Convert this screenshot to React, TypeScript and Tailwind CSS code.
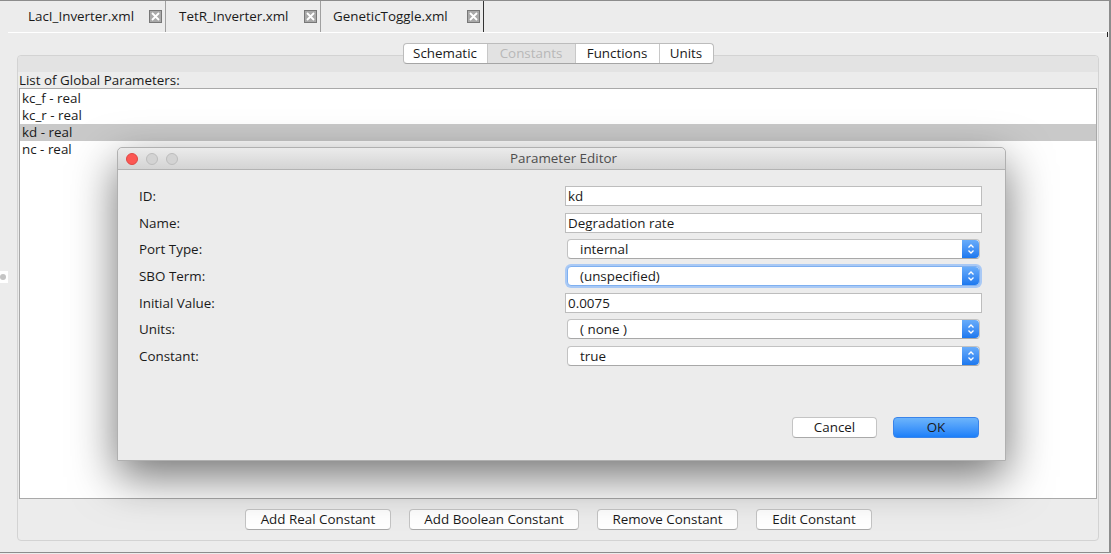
import { ReactNode } from 'react';

const tabs = [
  { name: 'LacI_Inverter.xml', w: 'w-[156px]', pl: 'pl-[18px]' },
  { name: 'TetR_Inverter.xml', w: 'w-[155px]', pl: 'pl-[13px]' },
  { name: 'GeneticToggle.xml', w: 'w-[163px]', pl: 'pl-[12px]' },
];

const params = ['kc_f - real', 'kc_r - real', 'kd - real', 'nc - real'];

function CloseBox() {
  return (
    <span className="w-[13px] h-[13px] bg-[#a9a9a9] border border-[#777] flex items-center justify-center">
      <svg width="9" height="9" viewBox="0 0 9 9">
        <path d="M1 1L8 8M8 1L1 8" stroke="#fff" strokeWidth="1.8" />
      </svg>
    </span>
  );
}

function Arrows() {
  return (
    <span className="w-[17px] h-full rounded-r-[4px] bg-gradient-to-b from-[#68acfa] to-[#1b78ef] flex items-center justify-center">
      <svg width="8" height="12" viewBox="0 0 8 12">
        <path d="M1.5 4.5L4 2L6.5 4.5M1.5 7.5L4 10L6.5 7.5" stroke="#fff" strokeWidth="1.3" fill="none" />
      </svg>
    </span>
  );
}

function TextField({ value }: { value: string }) {
  return (
    <div className="h-[20px] w-[417px] bg-white border border-[#bdbdbd] flex items-center pl-[2px]">{value}</div>
  );
}

function Select({ value, focus }: { value: string; focus?: boolean }) {
  return (
    <div
      className={`h-[20px] w-[413px] ml-[2px] bg-white rounded-[4px] flex items-center justify-between ${
        focus ? 'border border-[#7fb0f0] shadow-[0_0_0_2px_#a9c9f5]' : 'border border-[#c2c2c2] border-b-[#a8a8a8]'
      }`}
    >
      <span className="pl-[12px]">{value}</span>
      <Arrows />
    </div>
  );
}

function Row({ label, children }: { label: string; children: ReactNode }) {
  return (
    <div className="flex items-center h-[20px]">
      <span className="w-[426px]">{label}</span>
      {children}
    </div>
  );
}

function MacButton({ children, w }: { children: ReactNode; w: string }) {
  return (
    <button className={`${w} h-[21px] bg-white border border-[#c4c4c4] border-b-[#a9a9a9] rounded-[4px] flex items-center justify-center`}>
      {children}
    </button>
  );
}

export default function App() {
  return (
    <div className="w-[1111px] h-[554px] bg-[#ececec] relative overflow-hidden text-[13.4px] text-[#1a1a1a] font-['Open_Sans',sans-serif]">
      <div className="h-[553px] border-t border-b border-r-2 border-[#8c8c8c] flex flex-col">
        {/* file tabs */}
        <div className="h-[31px] flex pl-[10px]">
          {tabs.map((t, i) => (
            <div
              key={t.name}
              className={`${t.w} ${t.pl} h-full flex items-center justify-between pr-[3px] border-r ${
                i === 2 ? 'border-[#333]' : 'border-[#a0a0a0]'
              }`}
            >
              <span>{t.name}</span>
              <CloseBox />
            </div>
          ))}
        </div>
        <div className="h-px ml-[8px] bg-white flex justify-end">
          <span className="w-px h-[5px] bg-[#222] mr-[1px]" />
        </div>

        {/* content */}
        <div className="h-[507px] pt-[22px] pl-[17px] pr-[10px] pb-[11px] relative">
          <div className="h-[486px] border border-[#d3d3d3] rounded-[4px] flex flex-col">
            <div className="h-[16px] bg-[#e3e3e3] rounded-t-[4px] flex justify-center">
              <div className="-mt-[13px] h-[21px] flex bg-white border border-[#bcbcbc] border-b-[#a5a5a5] rounded-[4px] overflow-hidden">
                <span className="w-[84px] flex items-center justify-center border-r border-[#c8c8c8]">Schematic</span>
                <span className="w-[88px] flex items-center justify-center bg-[#e2e2e2] text-[#b8b8b8] border-r border-[#c8c8c8]">Constants</span>
                <span className="w-[84px] flex items-center justify-center border-r border-[#c8c8c8]">Functions</span>
                <span className="w-[53px] flex items-center justify-center">Units</span>
              </div>
            </div>
            <div className="h-[16px] pl-[1px] flex items-center">List of Global Parameters:</div>
            <div className="flex-1 mx-[1px] bg-white border border-[#a9a9a9] pt-[1px]">
              {params.map((p, i) => (
                <div key={p} className={`h-[17px] pl-[2px] flex items-center ${i === 2 ? 'bg-[#c9c9c9]' : ''}`}>
                  {p}
                </div>
              ))}
            </div>
            <div className="h-[41px] pt-[10px] flex justify-center gap-[18px] pl-[1px]">
              <MacButton w="w-[146px]">Add Real Constant</MacButton>
              <MacButton w="w-[170px]">Add Boolean Constant</MacButton>
              <MacButton w="w-[141px]">Remove Constant</MacButton>
              <MacButton w="w-[116px]">Edit Constant</MacButton>
            </div>
          </div>
        </div>
      </div>

      {/* split pane handle */}
      <div className="absolute left-0 top-[271px] w-[8px] h-[12px] bg-white flex items-center">
        <span className="w-[6px] h-[6px] rounded-full bg-[#c4c4c4]" />
      </div>

      {/* dialog */}
      <div className="absolute left-[117px] top-[147px] w-[889px] h-[314px] bg-[#ececec] rounded-t-[5px] border border-[#b0b0b0] shadow-[0_16px_45px_rgba(0,0,0,0.55)] flex flex-col">
        <div className="h-[22px] rounded-t-[5px] bg-gradient-to-b from-[#ebebeb] to-[#d4d4d4] border-b border-[#b3b3b3] flex items-center">
          <div className="flex gap-[8px] pl-[8px]">
            <span className="w-[12px] h-[12px] rounded-full bg-[#fc5753] border border-[#df4744]" />
            <span className="w-[12px] h-[12px] rounded-full bg-[#d3d3d3] border border-[#bdbdbd]" />
            <span className="w-[12px] h-[12px] rounded-full bg-[#d3d3d3] border border-[#bdbdbd]" />
          </div>
          <span className="flex-1 text-center text-[#4d4d4d] -ml-[56px]">Parameter Editor</span>
        </div>
        <div className="flex-1 flex flex-col pl-[21px] pt-[16px]">
          <div className="flex flex-col gap-[6.67px]">
            <Row label="ID:">
              <TextField value="kd" />
            </Row>
            <Row label="Name:">
              <TextField value="Degradation rate" />
            </Row>
            <Row label="Port Type:">
              <Select value="internal" />
            </Row>
            <Row label="SBO Term:">
              <Select value="(unspecified)" focus />
            </Row>
            <Row label="Initial Value:">
              <TextField value="0.0075" />
            </Row>
            <Row label="Units:">
              <Select value="( none )" />
            </Row>
            <Row label="Constant:">
              <Select value="true" />
            </Row>
          </div>
          <div className="mt-[51px] flex justify-end gap-[16px] pr-[26px]">
            <MacButton w="w-[85px]">Cancel</MacButton>
            <button className="w-[86px] h-[21px] rounded-[4px] bg-gradient-to-b from-[#6cb4fb] to-[#1a7ff9] border border-[#3a84ea] flex items-center justify-center">
              OK
            </button>
          </div>
        </div>
      </div>
    </div>
  );
}
